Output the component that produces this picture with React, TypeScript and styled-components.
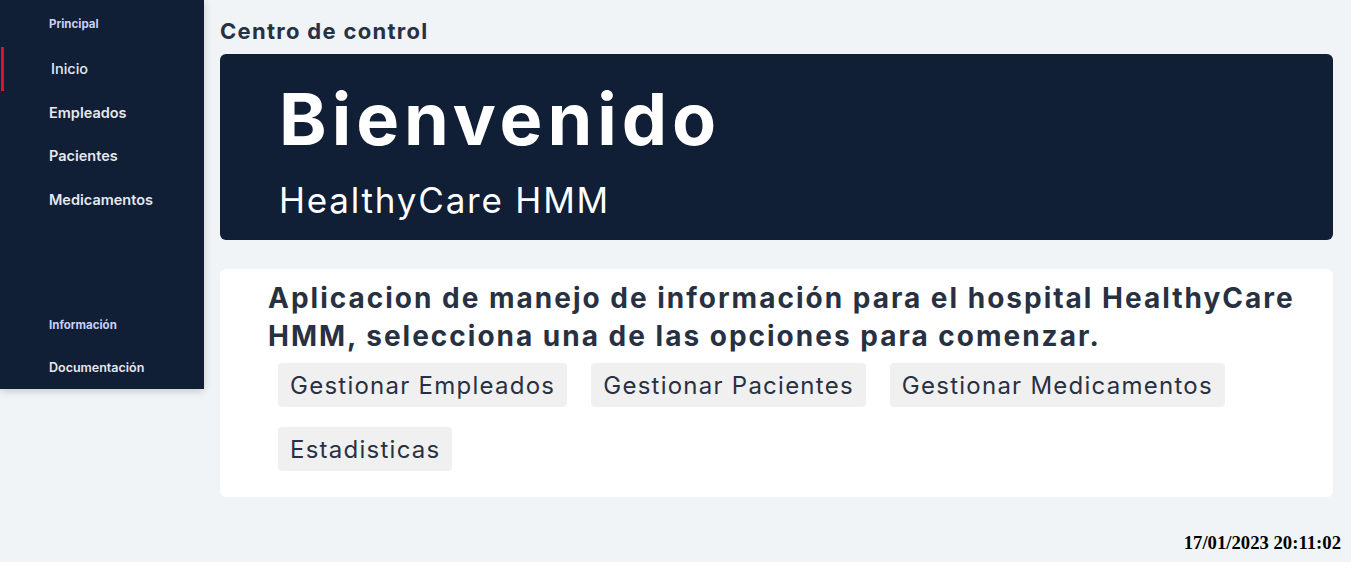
import React from "react";
import styled, { createGlobalStyle } from "styled-components";

const Global = createGlobalStyle`
  html, body { margin: 0; padding: 0; background: #f0f4f7; }
  body { font-family: "Inter", "Noto Sans", sans-serif; }
  * { box-sizing: border-box; }
`;

const Page = styled.div`
  display: flex;
  flex-direction: column;
  min-height: 562px;
`;

const Layout = styled.div`
  display: flex;
  align-items: flex-start;
`;

const Sidebar = styled.nav`
  width: 204px;
  height: 389px;
  background: #101e36;
  box-shadow: 0 2px 8px rgba(0, 0, 0, 0.18);
  display: flex;
  flex-direction: column;
  padding-top: 16px;
  flex-shrink: 0;
`;

const SectionLabel = styled.div<{ $top?: number }>`
  font-size: 11.5px;
  font-weight: 700;
  color: #c9cffc;
  padding-left: 49px;
  height: 16px;
  line-height: 16px;
  margin-top: ${(p) => p.$top ?? 0}px;
`;

const Spacer = styled.div<{ $h: number }>`
  height: ${(p) => p.$h}px;
`;

const NavItem = styled.a<{ $active?: boolean; $small?: boolean }>`
  display: flex;
  align-items: center;
  height: 44px;
  font-size: ${(p) => (p.$small ? 12.5 : 14.5)}px;
  font-weight: ${(p) => (p.$active ? 500 : 600)};
  color: #e6e8ee;
  border-left: 3px solid ${(p) => (p.$active ? "#e0102a" : "transparent")};
  margin-left: 1px;
  padding-left: ${(p) => (p.$active ? 47 : 45)}px;
  text-decoration: none;
`;

const Main = styled.main`
  flex: 1;
  padding: 16px 18px 0 16px;
  display: flex;
  flex-direction: column;
`;

const Title = styled.h2`
  margin: 0 0 8px 0;
  font-size: 22px;
  line-height: 30px;
  font-weight: 700;
  letter-spacing: 1.3px;
  color: #283142;
`;

const Hero = styled.section`
  background: #101e36;
  border-radius: 6px;
  height: 186px;
  padding: 22px 0 0 59px;
  color: #ffffff;
`;

const HeroTitle = styled.h1`
  margin: 0;
  font-size: 72px;
  line-height: 86px;
  font-weight: 700;
  letter-spacing: 5px;
`;

const HeroSub = styled.div`
  font-size: 35px;
  line-height: 44px;
  font-weight: 400;
  letter-spacing: 1.8px;
  margin-top: 16px;
`;

const Card = styled.section`
  margin-top: 29px;
  background: #ffffff;
  border-radius: 6px;
  padding: 10px 20px 26px 48px;
`;

const Lead = styled.p`
  margin: 0;
  font-size: 28px;
  line-height: 38px;
  font-weight: 700;
  letter-spacing: 2px;
  color: #283142;
`;

const Actions = styled.div`
  display: flex;
  flex-wrap: wrap;
  gap: 20px 24px;
  margin-top: 8px;
  padding-left: 10px;
`;

const Action = styled.button`
  font-family: inherit;
  border: none;
  background: #f0f0f0;
  border-radius: 4px;
  height: 44px;
  padding: 0 12px;
  font-size: 24px;
  letter-spacing: 1.25px;
  color: #283142;
  cursor: pointer;
`;

const Footer = styled.div`
  margin-top: auto;
  padding: 0 10px 8px 0;
  text-align: right;
  font-family: "Liberation Serif", serif;
  font-weight: 700;
  font-size: 18.7px;
  color: #000;
`;

export default function App() {
  return (
    <Page>
      <Global />
      <Layout>
        <Sidebar>
          <SectionLabel>Principal</SectionLabel>
          <Spacer $h={15} />
          <NavItem $active>Inicio</NavItem>
          <NavItem>Empleados</NavItem>
          <NavItem>Pacientes</NavItem>
          <NavItem>Medicamentos</NavItem>
          <SectionLabel $top={96}>Información</SectionLabel>
          <Spacer $h={12} />
          <NavItem $small>Documentación</NavItem>
        </Sidebar>
        <Main>
          <Title>Centro de control</Title>
          <Hero>
            <HeroTitle>Bienvenido</HeroTitle>
            <HeroSub>HealthyCare HMM</HeroSub>
          </Hero>
          <Card>
            <Lead>
              Aplicacion de manejo de información para el hospital HealthyCare HMM, selecciona una de las
              opciones para comenzar.
            </Lead>
            <Actions>
              <Action>Gestionar Empleados</Action>
              <Action>Gestionar Pacientes</Action>
              <Action>Gestionar Medicamentos</Action>
              <Action>Estadisticas</Action>
            </Actions>
          </Card>
        </Main>
      </Layout>
      <Footer>17/01/2023 20:11:02</Footer>
    </Page>
  );
}
